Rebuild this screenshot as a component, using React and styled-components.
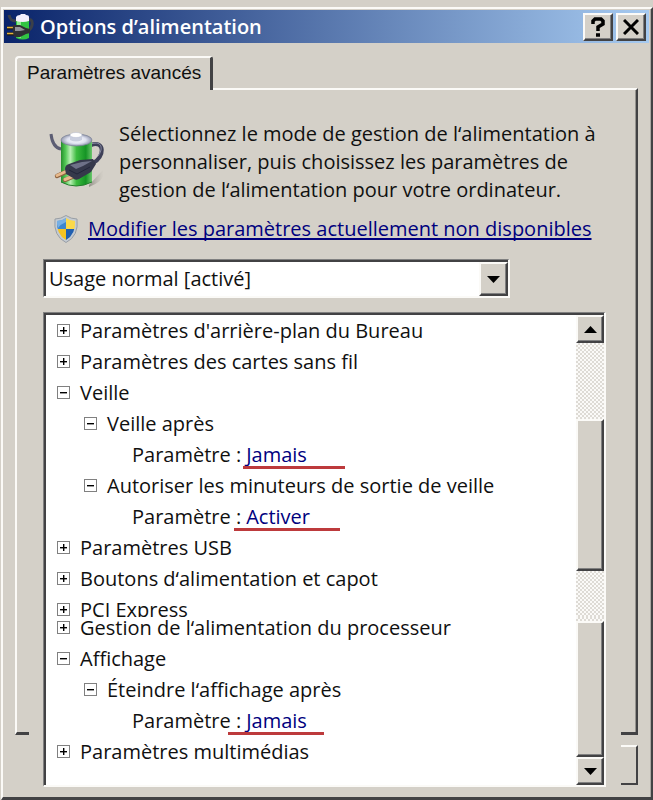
import React from 'react';
import styled, { createGlobalStyle, css } from 'styled-components';

const face = '#d4d0c8';
const dark = '#424244';
const mid = '#808080';
const light = '#fbfaf7';
const navy = '#00007e';

const GlobalStyle = createGlobalStyle`
  * { box-sizing: border-box; }
  body {
    margin: 0;
    background: ${face};
    color: #101010;
    font: 20px/28px "Open Sans", "Noto Sans", sans-serif;
  }
  button, select { font: inherit; color: inherit; }
`;

const raised = css`
  border: 2px solid;
  border-color: ${light} ${dark} ${dark} ${light};
  box-shadow: inset -1px -1px 0 ${mid};
  background: ${face};
  border-radius: 0;
`;

const Window = styled.main`
  margin: 7px 0 0 1px;
  padding-top: 1px;
  border: solid;
  border-width: 2px 2px 3px 2px;
  border-color: ${light} ${dark} ${dark} ${light};
  box-shadow: inset -1px 0 0 #aaa8a2;
`;

const TitleBar = styled.header`
  display: flex;
  align-items: center;
  gap: 3px;
  height: 33px;
  margin: 0 2px 0 1px;
  padding: 0 3px;
  background: linear-gradient(90deg, #0a246a, #a6caf0);
`;

const Title = styled.h1`
  flex: 1;
  margin: 0;
  padding-left: 2px;
  color: #fff;
  font-size: 20px;
  font-weight: 600;
  line-height: 28px;
`;

const TitleButton = styled.button`
  ${raised}
  display: grid;
  place-items: center;
  width: 30px;
  height: 28px;
  padding: 0;
`;

const Tabs = styled.div`
  display: flex;
  margin: 13px 12px 0;
`;

const Tab = styled.button`
  position: relative;
  z-index: 1;
  height: 34px;
  margin: 0 0 -2px;
  padding: 0 9px 2px 10px;
  border: solid;
  border-width: 2px 3px 0 2px;
  border-color: ${light} ${dark} ${face} ${light};
  border-radius: 4px 3px 0 0;
  background: ${face};
  font: 19px/28px "Liberation Sans", sans-serif;
`;

const Body = styled.div`
  display: grid;
  grid-template-columns: 14px 1fr 17px;
  grid-template-rows: 1fr 62px;
  margin: 0 13px 0 12px;
`;

const Frame = styled.div`
  grid-area: 1 / 1 / 2 / -1;
  border: solid;
  border-width: 2px 2px 3px 2px;
  border-color: ${light} ${dark} ${dark} ${light};
  box-shadow: inset -1px 0 0 #96948f;
`;

const ButtonEdge = styled.div`
  grid-area: 2 / 3;
  margin: 10px 0 12px;
  border: solid;
  border-width: 2px 2px 2px 0;
  border-color: ${light} ${dark} ${dark};
`;

const Content = styled.section`
  grid-area: 1 / 2 / 3 / 3;
  margin-top: 2px;
  padding: 30px 15px 10px 14px;
  background: ${face};
`;

const Intro = styled.div`
  display: flex;
  gap: 14px;
  padding-left: 6px;
  p { margin: 0; flex: 1; }
  svg { margin-top: 11px; flex: none; }
`;

const LinkRow = styled.div`
  display: flex;
  align-items: center;
  gap: 9px;
  margin: 11px 0 16px;
  padding-left: 10px;
  a {
    color: ${navy};
    text-decoration-thickness: 2px;
    text-decoration-skip-ink: none;
    text-underline-offset: 2px;
    white-space: nowrap;
  }
`;

const sunken = css`
  border: solid;
  border-width: 1px 2px 2px 1px;
  border-color: ${mid} ${light} ${light} ${mid};
  box-shadow: inset 2px 2px 0 ${dark};
  background: #fff;
`;

const PlanBox = styled.label`
  ${sunken}
  display: grid;
  grid-template-columns: 1fr 29px;
  width: 83%;
  height: 39px;
  padding: 2px 0 0 2px;
`;

const PlanSelect = styled.select`
  grid-area: 1 / 1 / 2 / 3;
  appearance: none;
  border: 0;
  padding: 0 32px 0 3px;
  background: none;
  outline: none;
`;

const DropArrow = styled.span`
  ${raised}
  grid-area: 1 / 2;
  display: grid;
  place-items: center;
  pointer-events: none;
`;

const ListBox = styled.div`
  ${sunken}
  margin-top: 14px;
  padding: 2px 0 0 2px;
`;

const Pane = styled.div`
  display: grid;
  grid-template-columns: 1fr 28px;
  height: ${p => p.$height}px;
  overflow: hidden;
`;

const Tree = styled.ul`
  margin: ${p => p.$shift}px 0 0;
  padding: 0;
  list-style: none;
`;

const Row = styled.li`
  display: flex;
  align-items: center;
  gap: 10px;
  height: 31px;
  padding-left: ${p => [11, 38, 86][p.$level]}px;
  white-space: nowrap;
`;

const Expander = styled.button`
  display: grid;
  place-items: center;
  width: 13px;
  height: 13px;
  padding: 0;
  border: 1px solid ${mid};
  background: #fff;
`;

const Setting = styled.span`
  display: flex;
  gap: 5px;
`;

const Value = styled.span`
  position: relative;
  color: ${navy};
`;

const Mark = styled.i`
  position: absolute;
  top: 25px;
  left: ${p => p.$from}px;
  width: ${p => p.$length}px;
  height: 3px;
  background: #bd3a3c;
`;

const ScrollBar = styled.div`
  display: flex;
  flex-direction: column;
  background: repeating-conic-gradient(#dedbd5 0 25%, #fbfaf8 0 50%) 0 0 / 4px 4px;
`;

const ScrollButton = styled.button`
  ${raised}
  display: grid;
  place-items: center;
  height: 28px;
  padding: 0;
`;

const Thumb = styled.div`
  ${raised}
  height: ${p => p.$height}px;
  margin-top: ${p => p.$gap}px;
`;

const ThumbEdge = styled.div`
  height: 2px;
  margin-top: auto;
  background: ${light};
  border-right: 2px solid ${dark};
`;

const Arrow = ({ up }) => (
  <svg width="13" height="7" viewBox="0 0 13 7" aria-hidden="true">
    <path d={up ? 'M0 7 6.500 0 13 7z' : 'M0 0h13L6.500 7z'} fill="#000" />
  </svg>
);

const Sign = ({ open }) => (
  <svg width="7" height="7" viewBox="0 0 7 7" shapeRendering="crispEdges" aria-hidden="true">
    <path d={open ? 'M0 3h7v1H0z' : 'M0 3h7v1H0zM3 0h1v7H3z'} fill="#000" stroke="#000" strokeWidth=".4" />
  </svg>
);

const SmallBattery = () => (
  <svg width="28" height="28" viewBox="0 0 28 28" aria-hidden="true">
    <path d="M2 2c1 5 3 6 7 6M20 7c7-3 7 8 0 11l-4 1" fill="none" stroke="#3b4048" strokeWidth="3" />
    <path d="M9 4h13v21q-6 3-13 0z" fill="#31c442" />
    <path d="M10 8h4v17l-4-1z" fill="#8cee8e" />
    <path d="M9 4q1-2 4-2l1-1h4l1 1q3 0 3 2v4q-6 2-13 0z" fill="#f3effb" />
    <path d="M0 15h8M0 21h8" stroke="#201a10" strokeWidth="3" />
    <path d="M0 14.500h7M0 20.500h7" stroke="#e6b43a" strokeWidth="1.600" />
    <path d="M6 12h7l6 3 4 1v4l-4 1-6 3H7q-2-6-1-12z" fill="#2f3034" />
    <path d="M8 14h5l5 3-5 1H8z" fill="#92949a" />
  </svg>
);

const Battery = () => (
  <svg width="56" height="58" viewBox="0 0 56 58" aria-hidden="true">
    <defs>
      <linearGradient id="cell"><stop offset="0" stopColor="#258e2b" /><stop offset=".15" stopColor="#55c958" /><stop offset=".3" stopColor="#baf0b5" /><stop offset=".5" stopColor="#3dbb40" /><stop offset=".8" stopColor="#159425" /><stop offset="1" stopColor="#6bc76c" /></linearGradient>
      <radialGradient id="cap"><stop offset="0" stopColor="#fff" /><stop offset=".6" stopColor="#dfe2f0" /><stop offset="1" stopColor="#9297ae" /></radialGradient>
      <linearGradient id="shade"><stop offset="0" stopColor="#77746e" stopOpacity=".7" /><stop offset="1" stopColor="#aaa69e" stopOpacity="0" /></linearGradient>
    </defs>
    <path d="M40 54 54 39q4 10-14 17z" fill="url(#shade)" />
    <path d="M2 3c1 9 4 14 10 15" fill="none" stroke="#5c5d73" strokeWidth="3" />
    <path d="M42 14c14-5 14 12 2 18" fill="none" stroke="#3e4058" strokeWidth="4" />
    <path d="M42 13c12-4 12 6 7 12" fill="none" stroke="#8b8da4" strokeWidth="1" />
    <path d="M12 9v42q15 8 31 0V9z" fill="url(#cell)" />
    <path d="M12 51q15 8 31 0" fill="none" stroke="#247c2c" />
    <ellipse cx="27.500" cy="9" rx="15.500" ry="6" fill="url(#cap)" stroke="#7b8397" strokeWidth=".7" />
    <path d="M21 4v5q6 3 12 0V4z" fill="#c9cede" />
    <ellipse cx="27" cy="4" rx="6" ry="2.500" fill="#fff" stroke="#b4bbce" strokeWidth=".5" />
    <path d="m19 40-11 5M28 44l-12 5" stroke="#8f6340" strokeWidth="4.400" strokeLinecap="round" />
    <path d="m19 39.500-11 5M28 43.500l-12 5" stroke="#e6b98c" strokeWidth="3" strokeLinecap="round" />
    <path d="M16 38q0-4 4-5l11-4 13-1 3 5-5 8-12 7q-4 2-6-1l-7-4z" fill="#35384b" />
    <path d="m21 34 12-3 10-1-9 5-7 3z" fill="#6e7188" />
    <path d="m20 39 8 4 13-7" fill="none" stroke="#22253a" strokeWidth="1" />
  </svg>
);

const Shield = () => (
  <svg width="26" height="28" viewBox="0 0 26 28" aria-hidden="true">
    <defs><clipPath id="badge"><path d="M13 3q4 3 9 3 1 13-9 19Q3 19 4 6q5 0 9-3z" /></clipPath></defs>
    <path d="M13 .500q5 3.500 11 3.500 2 17-11 23.500Q0 21 2 4 8 4 13 .500z" fill="#c4cbd2" stroke="#989ea5" strokeWidth="1" />
    <g clipPath="url(#badge)">
      <path d="M0 0h13v14H0z" fill="#3c86cf" />
      <path d="M13 0h13v14H13z" fill="#fbd94a" />
      <path d="M0 14h13v14H0z" fill="#f5c321" />
      <path d="M13 14h13v14H13z" fill="#205fb0" />
      <path d="M3 5q5 0 10-3v5Q8 9 5 13z" fill="#8fc0ec" opacity=".7" />
    </g>
  </svg>
);

const Branch = ({ level = 0, open = false, children }) => (
  <Row $level={level}>
    <Expander type="button" aria-expanded={open} aria-label={children}><Sign open={open} /></Expander>
    <span>{children}</span>
  </Row>
);

const Param = ({ value, from, length }) => (
  <Row $level={2}>
    <Setting>
      <span>Paramètre :</span>
      <Value>{value}<Mark $from={from} $length={length} /></Value>
    </Setting>
  </Row>
);

export default function App() {
  return (
    <>
      <GlobalStyle />
      <Window>
        <TitleBar>
          <SmallBattery />
          <Title>Options d’alimentation</Title>
          <TitleButton type="button" aria-label="Aide">
            <svg width="14" height="20" viewBox="0 0 14 20" aria-hidden="true">
              <path d="M2 7V4l2-2h6l2 2v3L7 10v4M5 18h4" fill="none" stroke="#000" strokeWidth="3.500" />
            </svg>
          </TitleButton>
          <TitleButton type="button" aria-label="Fermer">
            <svg width="16" height="16" viewBox="0 0 16 16" aria-hidden="true">
              <path d="m1 1 14 14M15 1 1 15" stroke="#000" strokeWidth="3" />
            </svg>
          </TitleButton>
        </TitleBar>
        <Tabs role="tablist">
          <Tab type="button" role="tab" aria-selected="true">Paramètres avancés</Tab>
        </Tabs>
        <Body>
          <Frame />
          <ButtonEdge />
          <Content>
            <Intro>
              <Battery />
              <p>Sélectionnez le mode de gestion de l‘alimentation à personnaliser, puis choisissez les paramètres de gestion de l‘alimentation pour votre ordinateur.</p>
            </Intro>
            <LinkRow>
              <Shield />
              <a href="#parametres">Modifier les paramètres actuellement non disponibles</a>
            </LinkRow>
            <PlanBox>
              <PlanSelect aria-label="Mode de gestion de l‘alimentation">
                <option>Usage normal [activé]</option>
              </PlanSelect>
              <DropArrow><Arrow /></DropArrow>
            </PlanBox>
            <ListBox>
              <Pane $height={302}>
                <Tree $shift={0}>
                  <Branch>Paramètres d'arrière-plan du Bureau</Branch>
                  <Branch>Paramètres des cartes sans fil</Branch>
                  <Branch open>Veille</Branch>
                  <Branch level={1} open>Veille après</Branch>
                  <Param value="Jamais" from={-3} length={102} />
                  <Branch level={1} open>Autoriser les minuteurs de sortie de veille</Branch>
                  <Param value="Activer" from={-12} length={106} />
                  <Branch>Paramètres USB</Branch>
                  <Branch>Boutons d‘alimentation et capot</Branch>
                  <Branch>PCI Express</Branch>
                </Tree>
                <ScrollBar>
                  <ScrollButton type="button" aria-label="Défiler vers le haut"><Arrow up /></ScrollButton>
                  <Thumb $height={152} $gap={76} />
                  <ThumbEdge />
                </ScrollBar>
              </Pane>
              <Pane $height={168}>
                <Tree $shift={-5}>
                  <Branch>Gestion de l‘alimentation du processeur</Branch>
                  <Branch open>Affichage</Branch>
                  <Branch level={1} open>Éteindre l‘affichage après</Branch>
                  <Param value="Jamais" from={-18} length={96} />
                  <Branch>Paramètres multimédias</Branch>
                </Tree>
                <ScrollBar>
                  <Thumb $height={136} $gap={4} />
                  <ScrollButton type="button" aria-label="Défiler vers le bas"><Arrow /></ScrollButton>
                </ScrollBar>
              </Pane>
            </ListBox>
          </Content>
        </Body>
      </Window>
    </>
  );
}
